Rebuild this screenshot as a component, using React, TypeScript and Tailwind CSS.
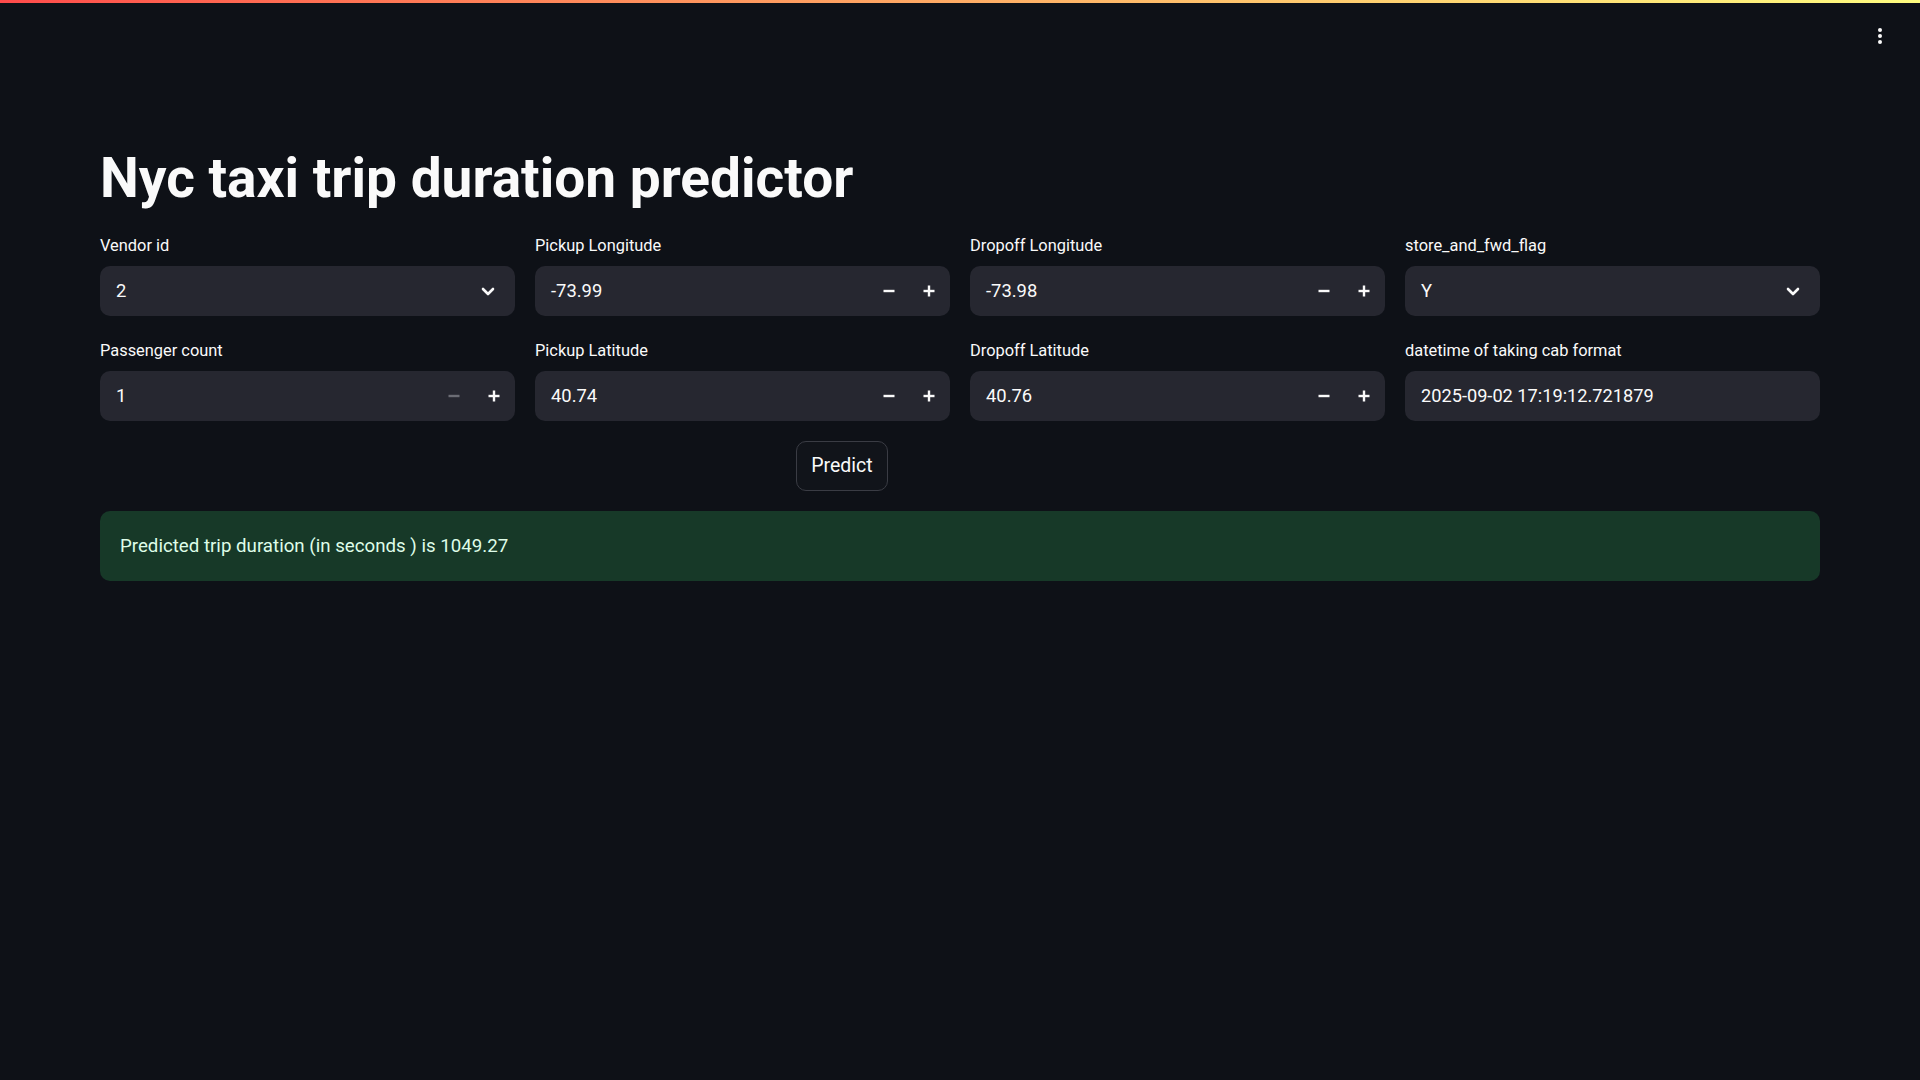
import { useState } from 'react';

const font = { fontFamily: 'Roboto, "Noto Sans", sans-serif' };

function Chevron() {
  return (
    <svg width="14" height="9" viewBox="0 0 14 9" fill="none">
      <path d="M2 2l5 5 5-5" stroke="#fafafa" strokeWidth="2.6" strokeLinecap="round" strokeLinejoin="round" />
    </svg>
  );
}

function Minus({ dim }: { dim?: boolean }) {
  return (
    <svg width="12" height="12" viewBox="0 0 12 12">
      <rect x="0.5" y="4.8" width="11" height="2.4" fill={dim ? '#6b6c74' : '#fafafa'} />
    </svg>
  );
}

function Plus() {
  return (
    <svg width="12" height="12" viewBox="0 0 12 12">
      <rect x="0.5" y="4.8" width="11" height="2.4" fill="#fafafa" />
      <rect x="4.8" y="0.5" width="2.4" height="11" fill="#fafafa" />
    </svg>
  );
}

function Label({ children }: { children: string }) {
  return <div className="h-[30px] mb-[5px] flex items-center text-[16.4px] text-[#fafafa]">{children}</div>;
}

function SelectBox({ label, value }: { label: string; value: string }) {
  return (
    <div>
      <Label>{label}</Label>
      <div className="h-[50px] rounded-[10px] bg-[#262730] flex items-center pl-4 pr-[20px] justify-between">
        <span className="text-[18.4px] text-[#fafafa]">{value}</span>
        <Chevron />
      </div>
    </div>
  );
}

function NumberBox({ label, value, minDisabled }: { label: string; value: string; minDisabled?: boolean }) {
  return (
    <div>
      <Label>{label}</Label>
      <div className="h-[50px] rounded-[10px] bg-[#262730] flex items-center pl-4">
        <span className="flex-1 text-[18.4px] text-[#fafafa]">{value}</span>
        <button className="w-10 h-full flex items-center justify-center">
          <Minus dim={minDisabled} />
        </button>
        <button className="w-10 h-full flex items-center justify-center mr-px">
          <Plus />
        </button>
      </div>
    </div>
  );
}

function TextBox({ label, value }: { label: string; value: string }) {
  return (
    <div>
      <Label>{label}</Label>
      <div className="h-[50px] rounded-[10px] bg-[#262730] flex items-center pl-4">
        <span className="text-[18.2px] text-[#fafafa]">{value}</span>
      </div>
    </div>
  );
}

export default function App() {
  const [shown] = useState(true);
  return (
    <div className="min-h-screen w-full bg-[#0e1117] relative" style={font}>
      <div className="h-[3px] w-full bg-gradient-to-r from-[#ff4b4b] to-[#fffd80]" />
      <button className="absolute top-[28px] right-[38px] flex flex-col gap-[2px]" aria-label="menu">
        <span className="w-1 h-1 rounded-full bg-[#fafafa]" />
        <span className="w-1 h-1 rounded-full bg-[#fafafa]" />
        <span className="w-1 h-1 rounded-full bg-[#fafafa]" />
      </button>

      <main className="px-[100px] pt-[142px] flex flex-col gap-5">
        <h1 className="text-[55px] leading-[66px] font-bold text-[#fafafa]">
          Nyc taxi trip duration predictor
        </h1>

        <div className="grid grid-cols-4 gap-x-5 gap-y-5">
          <SelectBox label="Vendor id" value="2" />
          <NumberBox label="Pickup Longitude" value="-73.99" />
          <NumberBox label="Dropoff Longitude" value="-73.98" />
          <SelectBox label="store_and_fwd_flag" value="Y" />
          <NumberBox label="Passenger count" value="1" minDisabled />
          <NumberBox label="Pickup Latitude" value="40.74" />
          <NumberBox label="Dropoff Latitude" value="40.76" />
          <TextBox label="datetime of taking cab format" value="2025-09-02 17:19:12.721879" />
        </div>

        <div className="pl-[696px]">
          <button className="h-[50px] w-[92px] rounded-[10px] border border-[#3a3c44] bg-[#11141a] text-[19.5px] text-[#fafafa]">
            Predict
          </button>
        </div>

        {shown && (
          <div className="h-[70px] rounded-[10px] bg-[#173928] flex items-center px-5 text-[18.7px] text-[#dffde9]">
            Predicted trip duration (in seconds ) is 1049.27
          </div>
        )}
      </main>
    </div>
  );
}
